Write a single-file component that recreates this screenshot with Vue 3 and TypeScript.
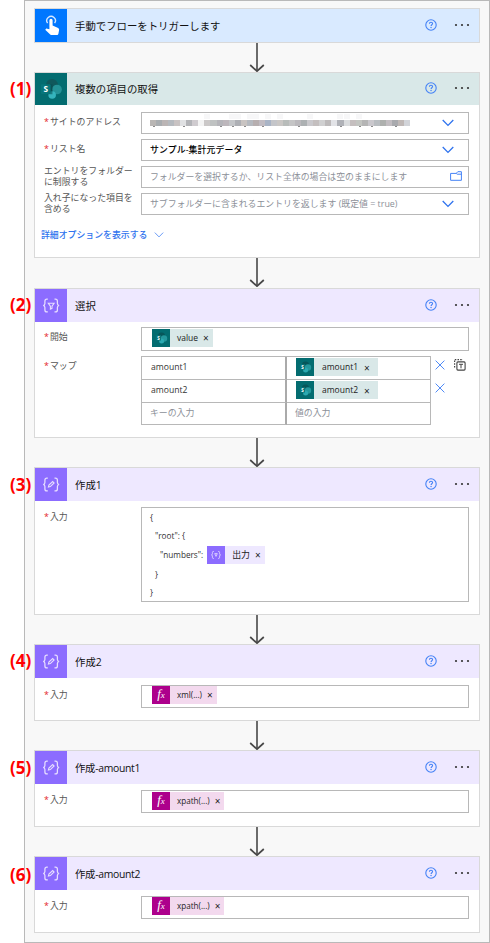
<script setup lang="ts">
type IconName = 'touch' | 'sharepoint' | 'filter' | 'compose'

interface Step {
  id: string
  number?: string
  title: string
  icon: IconName
  tone: string
}

interface Field {
  label: string
  required: boolean
  text: string
  style: string
  end: 'chevron' | 'folder'
}

const steps: Step[] = [
  { id: 'trigger', title: '手動でフローをトリガーします', icon: 'touch', tone: 'blue' },
  { id: 'items', number: '(1)', title: '複数の項目の取得', icon: 'sharepoint', tone: 'teal' },
  { id: 'select', number: '(2)', title: '選択', icon: 'filter', tone: 'violet' },
  { id: 'json', number: '(3)', title: '作成1', icon: 'compose', tone: 'violet' },
  { id: 'xml', number: '(4)', title: '作成2', icon: 'compose', tone: 'violet' },
  { id: 'amount1', number: '(5)', title: '作成-amount1', icon: 'compose', tone: 'violet' },
  { id: 'amount2', number: '(6)', title: '作成-amount2', icon: 'compose', tone: 'violet' },
]

const fields: Field[] = [
  { label: 'サイトのアドレス', required: true, text: '', style: 'masked', end: 'chevron' },
  { label: 'リスト名', required: true, text: 'サンプル-集計元データ', style: 'filled', end: 'chevron' },
  { label: 'エントリをフォルダーに制限する', required: false, text: 'フォルダーを選択するか、リスト全体の場合は空のままにします', style: 'hint', end: 'folder' },
  { label: '入れ子になった項目を含める', required: false, text: 'サブフォルダーに含まれるエントリを返します (既定値 = true)', style: 'hint', end: 'chevron' },
]

const mapRows = ['amount1', 'amount2']

// Shades of the obscured address, one 6px block each
const mosaic: string[] = [
  '#b9b6b4', '#a9adb0', '#bbb5b5', '#b6babf', '#c9c3c3', '#e0e1e3', '#b3b4b8', '#cfcbcf', '#f4f4f4',
  '#cbc8c8', '#bfc2c2', '#b5b5ba', '#bdb7bc', '#c4c6c9', '#aeb0b5', '#c9c4c2', '#b6bac0', '#b7afb0',
  '#c1bcc3', '#a9b4c6', '#c4c5c9', '#cac7c5', '#b8bcba', '#c5c5c6', '#bbb9bd', '#adb1b3', '#cac9cd',
  '#c4bfbf', '#d0d0d1', '#bdbabb', '#e2e3e7', '#b0b2b8', '#dadcde', '#c5bfbf', '#c3c5c1', '#b5b5b5',
  '#cac8cd', '#b9bdc1', '#aeb0ae', '#c2bdc1', '#a9aaae', '#bfb8b6', '#d2d4d9',
]

// Blocks where a descender or an ascender shows past the obscured band
const descenders = new Set([0, 5, 11, 13, 15, 18, 24, 31, 34, 36, 40])
const ascenders = new Set([9, 13, 14, 16, 17, 19, 21, 26, 31, 32, 34])

const expressions: Record<string, string> = {
  xml: 'xml(...)',
  amount1: 'xpath(...)',
  amount2: 'xpath(...)',
}
</script>

<template>
  <main class="flow">
    <template v-for="(step, index) in steps" :key="step.id">
      <svg v-if="index > 0" class="arrow" :class="'to-' + step.id" viewBox="0 0 16 29">
        <path d="M8 0V27" stroke="#6b6b6b" stroke-width="2" />
        <path d="M1.200 22L8 28.200L14.800 22" stroke="#484848" stroke-width="1.700" />
      </svg>

      <section class="card" :class="[step.id, step.tone]">
        <span v-if="step.number" class="number">{{ step.number }}</span>
        <header class="head">
          <span class="tile">
            <svg v-if="step.icon === 'touch'" viewBox="0 0 32 33">
              <path d="M12.600 14.200a4.300 4.300 0 1 1 7 0" fill="none" stroke="#d5e7ff" stroke-width="1.400" />
              <path d="M14.400 11.300a1.600 1.600 0 0 1 3.200 0v5.200l5 2.200c1.200.5 1.700 1.300 1.500 2.400l-.7 3.700c-.2.9-.7 1.300-1.600 1.300h-5c-.7 0-1.100-.2-1.600-.7L10.200 20.700l.8-.8c.3-.3.7-.4 1.200-.2l2.200.5z" fill="#fff" />
            </svg>
            <svg v-else-if="step.icon === 'sharepoint'" viewBox="0 0 32 33">
              <circle cx="17" cy="12.300" r="6.200" fill="#10585c" />
              <circle cx="22.200" cy="17" r="5" fill="#249297" />
              <circle cx="17.200" cy="22.600" r="3.900" fill="#35b4bd" />
              <path d="M11 11.500h6.500v10.500H12z" fill="#064d50" opacity=".55" />
              <rect x="5.600" y="11.600" width="10" height="10" rx="1" fill="#07757a" />
              <text x="10.600" y="19.800" text-anchor="middle" class="s-letter">S</text>
            </svg>
            <svg v-else viewBox="0 0 32 33" fill="none" stroke="#e7deff" stroke-width="1.250">
              <path d="M12.800 10.200h-.9c-1.500 0-2 .7-2 2v2.200c0 1.300-.4 1.900-1.700 2.100c1.300.2 1.700.8 1.700 2.100v2.300c0 1.300.5 2 2 2h.9M19.500 10.200h.9c1.500 0 2 .7 2 2v2.200c0 1.300.4 1.900 1.700 2.100c-1.300.2-1.700.8-1.700 2.100v2.300c0 1.300-.5 2-2 2h-.9" />
              <path v-if="step.icon === 'filter'" d="M13.300 14.200h5.800l-2.100 2.900v2.200l-1.600.8v-3z" stroke-width="1.100" />
              <path v-else d="M13.400 19.100l.5-2 3.800-3.500 1.400 1.400-3.700 3.600z" stroke-width="1.100" />
            </svg>
          </span>
          <h2>{{ step.title }}</h2>
          <svg class="help" viewBox="0 0 12 12">
            <circle cx="6" cy="6" r="5.200" fill="none" stroke="#4482f6" stroke-width="1.100" />
            <path d="M4.400 4.800c0-1 .7-1.600 1.600-1.600s1.600.6 1.600 1.400c0 1.100-1.500 1.200-1.500 2.300" fill="none" stroke="#4482f6" stroke-width="1.100" />
            <circle cx="6.050" cy="8.500" r=".7" fill="#4482f6" />
          </svg>
          <svg class="more" viewBox="0 0 16 4" fill="#333">
            <circle cx="2" cy="2" r="1.100" /><circle cx="8" cy="2" r="1.100" /><circle cx="14" cy="2" r="1.100" />
          </svg>
        </header>

        <div v-if="step.id === 'items'" class="body">
          <div v-for="field in fields" :key="field.label" class="row">
            <label :class="{ required: field.required }">{{ field.label }}</label>
            <div class="box select" :class="field.style">
              <span v-if="field.style === 'masked'" class="mosaic">
                <i
                  v-for="(shade, n) in mosaic"
                  :key="n"
                  :class="{ low: descenders.has(n), high: ascenders.has(n) }"
                  :style="{ background: shade }"
                ></i>
              </span>
              <span v-else class="value">{{ field.text }}</span>
              <svg v-if="field.end === 'chevron'" class="chevron" viewBox="0 0 12 8">
                <path d="M.7 1L6 6.400L11.300 1" fill="none" stroke="#2f73ee" stroke-width="1.300" />
              </svg>
              <svg v-else class="folder" viewBox="0 0 12 10">
                <path d="M.6 2.400h5.600L7.800.7h3.600v8.600H.6zM6.200 2.400l1 .8h4.200" fill="none" stroke="#4482f6" />
              </svg>
            </div>
          </div>
          <a class="advanced">詳細オプションを表示する
            <svg viewBox="0 0 10 6"><path d="M.8.6L5 4.900L9.200.6" fill="none" stroke="#5b91f5" stroke-width=".9" /></svg>
          </a>
        </div>

        <div v-else-if="step.id === 'select'" class="body">
          <div class="row">
            <label class="required">開始</label>
            <div class="box">
              <span class="token teal">
                <svg viewBox="0 0 18 18"><circle cx="9.500" cy="7" r="3.600" fill="#07565a" /><circle cx="12" cy="9.500" r="3.200" fill="#24979c" /><circle cx="9.600" cy="12" r="2.500" fill="#2ba9b1" /><rect x="3.700" y="6.200" width="5.300" height="5.300" fill="#07757a" /><text x="6.400" y="10.500" text-anchor="middle" class="s-small">S</text></svg>
                <span>value</span><b class="close">×</b>
              </span>
            </div>
          </div>
          <div class="row map-row">
            <label class="required">マップ</label>
            <div class="map">
              <template v-for="name in mapRows" :key="name">
                <div class="cell key">{{ name }}</div>
                <div class="cell">
                  <span class="token teal">
                    <svg viewBox="0 0 18 18"><circle cx="9.500" cy="7" r="3.600" fill="#07565a" /><circle cx="12" cy="9.500" r="3.200" fill="#24979c" /><circle cx="9.600" cy="12" r="2.500" fill="#2ba9b1" /><rect x="3.700" y="6.200" width="5.300" height="5.300" fill="#07757a" /><text x="6.400" y="10.500" text-anchor="middle" class="s-small">S</text></svg>
                    <span>{{ name }}</span><b class="close">×</b>
                  </span>
                </div>
              </template>
              <div class="cell key hint">キーの入力</div>
              <div class="cell hint">値の入力</div>
            </div>
            <div class="tools">
              <svg v-for="name in mapRows" :key="name" class="remove" viewBox="0 0 10 10">
                <path d="M.6.6L9.400 9.400M9.400.6L.6 9.400" stroke="#4f8af7" stroke-width="1" />
              </svg>
            </div>
            <svg class="mode" viewBox="0 0 12 12" fill="none" stroke="#444">
              <path d="M.6 8.500V.6H9" stroke-width="1.200" stroke-dasharray="1.500 1.200" />
              <rect x="2.900" y="2.900" width="8.200" height="8.200" rx="1" stroke-width="1.100" />
              <path d="M5 5.300h4M7 5.300v4" />
            </svg>
          </div>
        </div>

        <div v-else-if="step.id === 'json'" class="body">
          <div class="row">
            <label class="required">入力</label>
            <div class="box code">
              <div>{</div>
              <div class="in1">"root": {</div>
              <div class="in2 wide">"numbers":
                <span class="token violet">
                  <svg viewBox="0 0 18 18" fill="none" stroke="#e7deff" stroke-width=".8"><path d="M7 5.500H6.300c-.7 0-.9.4-.9 1v1.300c0 .6-.3 1-.9 1.100c.6.100.9.500.9 1.100v1.400c0 .6.200 1 .9 1H7M11 5.500h.7c.7 0 .9.4.9 1v1.300c0 .6.300 1 .9 1.100c-.6.100-.9.500-.9 1.100v1.400c0 .6-.2 1-.9 1H11M7.700 7.600L9 10.400L10.300 7.600z" /></svg>
                  <span>出力</span><b class="close">×</b>
                </span>
              </div>
              <div class="in1">}</div>
              <div>}</div>
            </div>
          </div>
        </div>

        <div v-else-if="expressions[step.id]" class="body">
          <div class="row">
            <label class="required">入力</label>
            <div class="box">
              <span class="token pink">
                <em>f<small>x</small></em>
                <span>{{ expressions[step.id] }}</span><b class="close">×</b>
              </span>
            </div>
          </div>
        </div>
      </section>
    </template>
  </main>
</template>

<style>
body {
  background: #fff;
}
</style>

<style scoped>
* {
  box-sizing: border-box;
}

.flow {
  width: 466px;
  height: 943px;
  margin-left: 24px;
  padding: 7px 9px 0;
  display: flex;
  flex-direction: column;
  align-items: center;
  background: #f8f8f8;
  border: 1px solid #b9b9b9;
  font-family: "Open Sans", "Noto Sans CJK JP", sans-serif;
  font-size: 8.9px;
  color: #333;
}

svg {
  display: block;
  flex: none;
}

.arrow {
  width: 16px;
  height: 29px;
  fill: none;
}

.arrow.to-select {
  margin-bottom: 1px;
}

.card {
  position: relative;
  flex: none;
  width: 446px;
  height: 77px;
  background: #fff;
  border: 1px solid #d9d9d9;
}

.card.trigger { height: 35px; }
.card.items { height: 186px; }
.card.select { height: 150px; }
.card.json { height: 148px; }

.number {
  position: absolute;
  left: -25px;
  top: 4px;
  font-size: 17px;
  line-height: 24px;
  font-weight: 700;
  color: #f00;
}

.json .number,
.amount1 .number { top: 5px; }
.amount2 .number { top: 6px; }

.head {
  height: 33px;
  display: flex;
  align-items: center;
}

.items .head { height: 32px; }
.blue .head { background: #d9eaff; }
.teal .head { background: #d9e8e8; }
.violet .head { background: #eee8ff; }

.tile {
  width: 32px;
  height: 100%;
}

.tile svg {
  width: 32px;
  height: 100%;
}

.blue .tile { background: #0077ff; }
.teal .tile { background: #036c70; }
.violet .tile { background: #8c6cff; }

.s-letter {
  font: 700 8.500px "Open Sans", sans-serif;
  fill: #fff;
}

.s-small {
  font: 700 4.500px "Open Sans", sans-serif;
  fill: #fff;
}

h2 {
  flex: 1;
  margin: 0 0 0 8px;
  font-size: 10.400px;
  font-weight: 400;
  line-height: 16px;
  color: #111;
}

.amount1 h2,
.amount2 h2 {
  letter-spacing: -.3px;
}

.help {
  width: 12px;
  height: 12px;
  margin: 0 17px 2px 0;
}

.more {
  width: 16px;
  height: 4px;
  margin: 0 9px 2px 0;
}

.body {
  padding: 6px 10px 0 9px;
}

.items .body { padding-top: 7px; }
.select .body { padding-top: 5px; }
.items .row { margin-bottom: 5px; }

.row {
  display: flex;
}

label {
  width: 97px;
  flex: none;
  padding-right: 6px;
  line-height: 11px;
  margin-top: 4px;
  color: #555;
}

.items label {
  margin: -1px 0 -5px;
  padding-right: 7px;
}

.items label.required { margin-top: 4px; }

.required::before {
  content: "*";
  display: inline-block;
  width: 6px;
  color: #e3242b;
}

.box {
  width: 328px;
  height: 24px;
  flex: none;
  padding: 1px 0 0 10px;
  border: 1px solid #b8b8b8;
  background: #fff;
}

.xml .box,
.amount1 .box,
.amount2 .box { height: 23px; }
.xml .body { padding-top: 7px; }
.xml .box { padding-top: 0; }
.amount2 .box { padding-top: 0; }

.box.select {
  height: 22px;
  padding: 0 14px 0 8px;
  display: flex;
  align-items: center;
  justify-content: space-between;
}

.value {
  line-height: 12px;
  white-space: nowrap;
}

.filled {
  color: #000;
  font-weight: 500;
  letter-spacing: .1px;
}

.hint { color: #8c9098; }

.chevron {
  width: 12px;
  height: 8px;
}

.folder {
  width: 12px;
  height: 10px;
  margin: 0 -8px 2px 0;
}

.mosaic {
  width: 260px;
  display: flex;
}

.mosaic i {
  position: relative;
  flex: 1;
  height: 6px;
}

.low::after {
  content: "";
  position: absolute;
  left: 3px;
  bottom: -1px;
  width: 2px;
  height: 1px;
  background: #8a8a8a;
}

.high::before {
  content: "";
  position: absolute;
  left: 0;
  top: -6px;
  width: 6px;
  height: 5px;
  background: #f7f7f8;
}

.advanced {
  display: flex;
  align-items: center;
  gap: 6px;
  margin: 14px 0 0 -3px;
  line-height: 12px;
  font-weight: 500;
  color: #2f73ee;
}

.advanced svg {
  width: 10px;
  height: 6px;
}

.token {
  display: inline-flex;
  align-items: center;
  height: 18px;
  font-size: 8.500px;
  line-height: 18px;
  color: #222;
}

.token.teal { background: #d9e8e8; }

.token.violet {
  background: #eee8ff;
  font-size: 8.900px;
}

.token.pink {
  background: #f3d9ee;
  font-size: 8.100px;
}

.token svg,
.token em {
  width: 18px;
  height: 18px;
  margin-right: 7px;
}

.token.teal svg { background: #036c70; }
.token.violet svg { background: #8c6cff; }

.token em {
  background: #ad008c;
  color: #fff;
  font: italic 400 13px/16px "Liberation Serif", serif;
  text-align: center;
}

.token small {
  font-size: 9px;
}

.close {
  margin: 0 4px 0 5px;
  font-size: 10px;
  font-weight: 500;
}

.map-row {
  margin-top: 5px;
}

.map {
  width: 290px;
  height: 69px;
  display: grid;
  grid-template-columns: 145px 144px;
  grid-template-rows: 23px 23px 22px;
  border: solid #b8b8b8;
  border-width: 1px 0 0 1px;
}

.cell {
  padding: 1px 0 0 9px;
  border: solid #b8b8b8;
  border-width: 0 1px 1px 0;
  line-height: 19px;
}

.cell.key {
  padding-left: 9px;
  border-right: 2px solid #aaa;
  font-size: 8.600px;
}

.cell .token svg { margin-right: 8px; }
.cell .close { margin: 1px 8px 0 6px; }

.cell.hint {
  padding-left: 8px;
  font-size: 8.900px;
  line-height: 17px;
}

.tools {
  display: flex;
  flex-direction: column;
  gap: 13px;
  margin: 4px 0 0 4px;
}

.remove {
  width: 10px;
  height: 10px;
}

.mode {
  width: 12px;
  height: 12px;
  margin: 3px 0 0 9px;
}

.box.code {
  height: 95px;
  padding: 1px 0 0 8px;
  font-size: 8.200px;
  line-height: 18px;
}

.code > div {
  height: 18px;
}

.code .wide {
  display: flex;
  align-items: center;
  gap: 4px;
  height: 20px;
}

.code .wide + div { margin-top: 1px; }
.code .in1 { padding-left: 5px; }
.code .in2 { padding-left: 10px; }
</style>
